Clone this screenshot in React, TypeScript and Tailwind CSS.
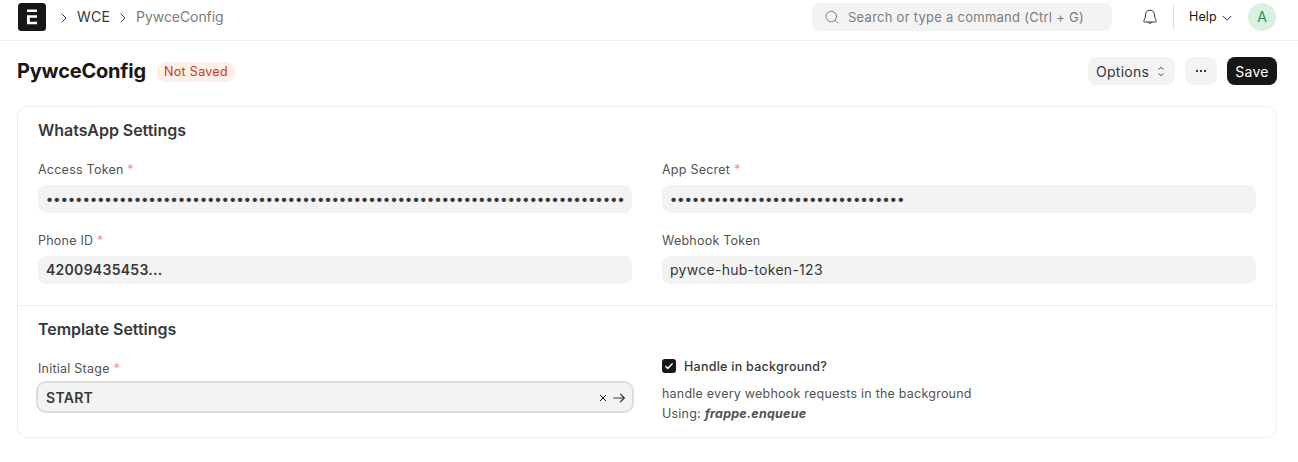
import React from "react";

function Chevron({ className, d = "M6 4 10 8 6 12" }: { className?: string; d?: string }) {
  return (
    <svg className={className} viewBox="0 0 16 16" fill="none" stroke="currentColor" strokeLinecap="round" strokeLinejoin="round">
      <path d={d} />
    </svg>
  );
}

function Label({ text, required }: { text: string; required?: boolean }) {
  return (
    <label className="block h-5 text-[12.5px] leading-[22px] tracking-[0.019em] text-[#525252]">
      {text}
      {required && <span className="text-[#f28f8d]">&nbsp;*</span>}
    </label>
  );
}

function Field({ label, value, required, type = "text" }: { label: string; value: string; required?: boolean; type?: string }) {
  return (
    <div>
      <Label text={label} required={required} />
      <input
        type={type}
        readOnly
        value={value}
        className={
          "mt-1.5 block h-7 w-full rounded-lg bg-[#f3f3f3] px-2 pb-0.5 text-sm tracking-[0.02em] text-[#383838] outline-none " +
          (required ? "font-semibold" : "font-normal")
        }
      />
    </div>
  );
}

export default function App() {
  return (
    <div className="h-[462px] overflow-hidden bg-white font-[Inter,sans-serif] text-[#171717]">
      <header className="flex h-[41px] border-b border-[#ededed] pl-[18px] pr-[22px] pt-[3px]">
        <svg className="size-7 shrink-0" viewBox="0 0 28 28">
          <rect width="28" height="28" rx="3.5" fill="#171717" />
          <path d="M9 6.5h10v2.5H9zM9 12.2h10v2.5h-7.2v4H19v2.5H9z" fill="#fff" />
        </svg>
        <nav className="flex h-7 items-center text-sm">
          <Chevron className="ml-[10px] mt-px size-4 text-[#383838]" />
          <span className="ml-[5px] tracking-[0.015em] text-[#383838]">WCE</span>
          <Chevron className="ml-[5px] mt-px size-4 text-[#383838]" />
          <span className="ml-[5px] tracking-[-0.005em] text-[#7c7c7c]">PywceConfig</span>
        </nav>
        <div className="ml-auto flex h-7 w-[300px] items-center rounded-lg bg-[#f3f3f3] pl-[13px] text-[13px] tracking-[0.02em] text-[#7c7c7c]">
          <svg className="mr-[9px] size-[14px]" viewBox="0 0 14 14" fill="none" stroke="#7c7c7c" strokeLinecap="round">
            <circle cx="6.3" cy="6.5" r="5.3" />
            <path d="m10.2 10.4 2.3 2.3" />
          </svg>
          <span className="pt-px">Search or type a command (Ctrl + G)</span>
        </div>
        <svg className="ml-[30px] mt-[6px] h-4 w-4" viewBox="0 0 16 16" fill="none" stroke="#383838" strokeLinejoin="round">
          <path d="M8 1.2C5 1.2 3.5 3.4 3.5 6c0 3.6-1.8 4.8-1.8 6.3 0 .5.3.7.8.7h11c.5 0 .8-.2.8-.7 0-1.5-1.8-2.7-1.8-6.3 0-2.6-1.5-4.8-4.5-4.8ZM6 13.2c.3 1.4 3.7 1.4 4 0" />
        </svg>
        <div className="ml-[15px] mt-0.5 h-6 w-px bg-[#dedede]" />
        <div className="ml-[15px] flex h-7 w-[45px] items-center justify-between pt-px text-[12.5px] tracking-[0.01em]">
          Help
          <Chevron className="size-3.5" d="M3.5 6 8 10.5 12.5 6" />
        </div>
        <div className="ml-[14px] flex size-7 items-center justify-center rounded-full bg-[#daf0e1] text-sm text-[#278f5e]">A</div>
      </header>

      <div className="flex h-[65px] items-center pb-[5px] pl-[17px] pr-[21px]">
        <h1 className="w-[129px] whitespace-nowrap text-xl font-bold tracking-[-0.01em]">PywceConfig</h1>
        <span className="ml-2.5 mt-0.5 flex h-5 w-20 items-center justify-center rounded-full bg-[#fff0e7] text-[12.5px] tracking-[0.025em] text-[#bd3e2c]">Not Saved</span>
        <button className="ml-auto flex h-7 w-[87px] items-center rounded-lg bg-[#f3f3f3] pl-2 pt-px text-sm tracking-[0.02em] text-[#383838]">
          Options
          <svg className="ml-[6px] size-3" viewBox="0 0 12 12" fill="none" stroke="#383838" strokeLinecap="round" strokeLinejoin="round">
            <path d="M4 3.2 6 1.2l2 2M4 7.8l2 2 2-2" />
          </svg>
        </button>
        <button className="ml-2.5 flex h-7 w-8 items-center justify-center rounded-lg bg-[#f3f3f3]">
          <svg className="size-4" viewBox="0 0 16 16" fill="#383838">
            <path d="M3 7h2v2H3zM7 7h2v2H7zM11 7h2v2h-2z" />
          </svg>
        </button>
        <button className="ml-2.5 h-7 w-[50px] rounded-lg bg-[#171717] pt-px text-sm tracking-[0.02em] text-white">Save</button>
      </div>

      <main className="ml-[17px] h-[332px] w-[1260px] rounded-[10px] border border-[#ededed]">
        <section className="h-[199px] border-b border-[#ededed] px-5 pt-[11px]">
          <h2 className="text-base font-semibold leading-6 tracking-[-0.003em] text-[#383838]">WhatsApp Settings</h2>
          <div className="mt-[17px] grid grid-cols-2 gap-x-[30px] gap-y-[17px]">
            <Field label="Access Token" value={"x".repeat(79)} required type="password" />
            <Field label="App Secret" value={"x".repeat(32)} required type="password" />
            <Field label="Phone ID" value="42009435453..." required />
            <Field label="Webhook Token" value="pywce-hub-token-123" />
          </div>
        </section>
        <section className="px-5 pt-[11px]">
          <h2 className="text-base font-semibold leading-6 tracking-[-0.003em] text-[#383838]">Template Settings</h2>
          <div className="grid grid-cols-2 gap-x-[30px]">
            <div className="pt-[17px]">
              <Label text="Initial Stage" required />
              <div className="mt-[5px] flex h-7 items-center rounded-lg bg-[#f3f3f3] pl-2 pr-[7px] pt-0.5 shadow-[0_0_0_2px_#dddddd]">
                <span className="text-sm font-semibold tracking-[0.02em] text-[#383838]">START</span>
                <svg className="ml-auto size-2" viewBox="0 0 8 8" fill="none" stroke="#171717">
                  <path d="m1 1 6 6M7 1 1 7" />
                </svg>
                <svg className="ml-1.5 h-3 w-3" viewBox="0 0 12 12" fill="none" stroke="#383838" strokeWidth="1.2" strokeLinecap="round" strokeLinejoin="round">
                  <path d="M.7 6h10.6M7.5 2.2 11.3 6 7.5 9.8" />
                </svg>
              </div>
            </div>
            <div className="pt-[15px] text-[12.5px] leading-5 tracking-[0.018em] text-[#525252]">
              <label className="flex h-5 items-center font-medium tracking-[0.021em] text-[#383838]">
                <svg className="mr-2 size-3.5" viewBox="0 0 14 14">
                  <rect width="14" height="14" rx="3" fill="#171717" />
                  <path d="m3.8 7.4 2 2 4.4-4.6" fill="none" stroke="#fff" strokeWidth="1.4" strokeLinecap="round" strokeLinejoin="round" />
                </svg>
                <span className="pt-0.5">Handle in background?</span>
              </label>
              <p className="mt-2">
                handle every webhook requests in the background
                <br />
                Using: <b className="italic">frappe.enqueue</b>
              </p>
            </div>
          </div>
        </section>
      </main>
    </div>
  );
}
